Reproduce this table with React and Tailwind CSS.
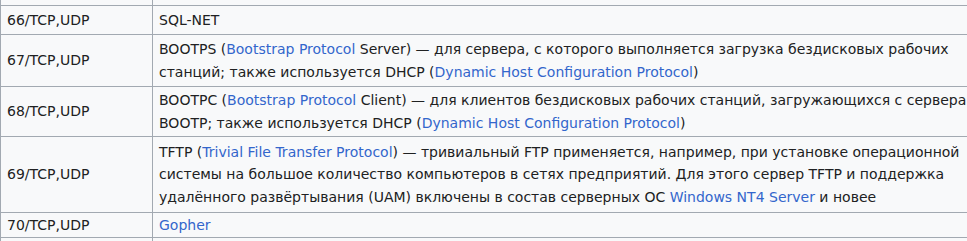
import React from "react";

const L = ({ children }) => <span className="text-[#3366cc]">{children}</span>;

function Row({ port, h, children, last }) {
  return (
    <div className={`flex border-b border-[#a2a9b1] ${h}`}>
      <div className="w-[153px] shrink-0 border-l border-r border-[#a2a9b1] flex items-center pl-[6px]">
        {port}
      </div>
      <div className="flex-1 flex flex-col justify-center pl-[6px] whitespace-nowrap">
        {children}
      </div>
    </div>
  );
}

export default function App() {
  return (
    <div
      className="w-[967px] h-[241px] overflow-hidden bg-white text-[#202122] text-[14px] leading-[22.5px]"
      style={{ fontFamily: '"DejaVu Sans", sans-serif' }}
    >
      <div className="w-[1100px] bg-[#f8f9fa]">
        <Row port="" h="h-[6px]" />
        <Row port="66/TCP,UDP" h="h-[29px]">
          <div>SQL-NET</div>
        </Row>
        <Row port="67/TCP,UDP" h="h-[52px]">
          <div>
            BOOTPS (<L>Bootstrap Protocol</L> Server) — для сервера, с которого выполняется загрузка бездисковых рабочих
          </div>
          <div>
            станций; также используется DHCP (<L>Dynamic Host Configuration Protocol</L>)
          </div>
        </Row>
        <Row port="68/TCP,UDP" h="h-[50px]">
          <div>
            BOOTPC (<L>Bootstrap Protocol</L> Client) — для клиентов бездисковых рабочих станций, загружающихся с сервера
          </div>
          <div>
            BOOTP; также используется DHCP (<L>Dynamic Host Configuration Protocol</L>)
          </div>
        </Row>
        <Row port="69/TCP,UDP" h="h-[76px]">
          <div>
            TFTP (<L>Trivial File Transfer Protocol</L>) — тривиальный FTP применяется, например, при установке операционной
          </div>
          <div>
            системы на большое количество компьютеров в сетях предприятий. Для этого сервер TFTP и поддержка
          </div>
          <div>
            удалённого развёртывания (UAM) включены в состав серверных ОС <L>Windows NT4 Server</L> и новее
          </div>
        </Row>
        <Row port="70/TCP,UDP" h="h-[25px]">
          <div>
            <L>Gopher</L>
          </div>
        </Row>
        <Row port="" h="h-[20px]" />
      </div>
    </div>
  );
}
